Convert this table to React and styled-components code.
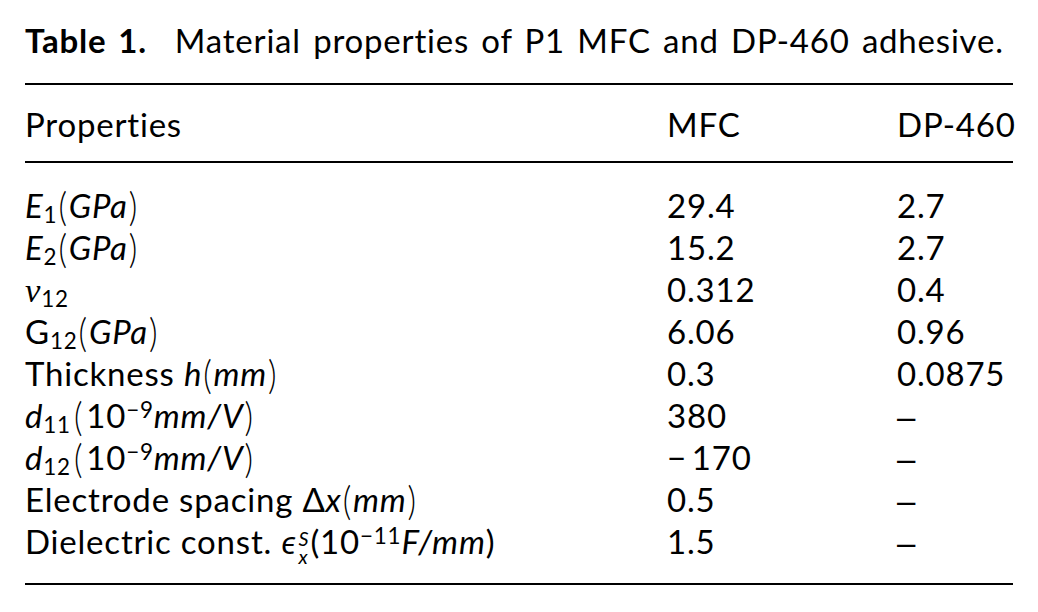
import styled, { createGlobalStyle } from "styled-components";

const GlobalStyle = createGlobalStyle`
  body {
    margin: 0;
    background: #fff;
    color: #000;
    font-family: Lato, "Open Sans", sans-serif;
  }
`;

const Page = styled.div`
  width: 988px;
  padding: 19px 0 0 25px;
`;

const Caption = styled.div`
  font-size: 33px;
  line-height: 42px;
  letter-spacing: 0.8px;
  word-spacing: 3px;
  margin-bottom: 22px;
  white-space: nowrap;
`;

const CaptionLabel = styled.span`
  font-weight: 700;
  margin-right: 28px;
`;

const Rule = styled.div`
  height: 2px;
  background: #000;
`;

const Grid = styled.div`
  display: grid;
  grid-template-columns: 642px 230px 1fr;
  grid-auto-rows: 42px;
  font-size: 33px;
  line-height: 42px;
  letter-spacing: 0.8px;
  padding: ${(p) => p.$pad};
`;

const Cell = styled.div`
  white-space: nowrap;
`;

const Var = styled.i`
  font-style: italic;
`;

const Sub = styled.span`
  font-size: 0.68em;
  vertical-align: -0.22em;
  line-height: 0;
  font-style: normal;
`;

const Sup = styled.span`
  font-size: 0.68em;
  vertical-align: 0.45em;
  line-height: 0;
`;

const Paren = styled.span`
  display: inline-block;
  transform: scaleY(1.22);
  font-weight: 300;
  margin: 0 ${(p) => p.$gap || 1}px;
`;

const Nu = styled.span`
  font-family: "Liberation Serif", serif;
  font-style: italic;
  font-size: 1.05em;
`;

const Scripts = styled.span`
  display: inline-flex;
  flex-direction: column;
  font-size: 0.6em;
  line-height: 0.95;
  vertical-align: 0.42em;
  font-style: italic;
  margin: 0 1px 0 2px;
`;

const Dash = styled.span`
  font-family: "Liberation Sans", sans-serif;
`;

const dash = <Dash>–</Dash>;

const rows = [
  [
    <>
      <Var>E</Var>
      <Sub>1</Sub>
      <Paren>(</Paren>
      <Var>GPa</Var>
      <Paren>)</Paren>
    </>,
    "29.4",
    "2.7",
  ],
  [
    <>
      <Var>E</Var>
      <Sub>2</Sub>
      <Paren>(</Paren>
      <Var>GPa</Var>
      <Paren>)</Paren>
    </>,
    "15.2",
    "2.7",
  ],
  [
    <>
      <Nu>ν</Nu>
      <Sub>12</Sub>
    </>,
    "0.312",
    "0.4",
  ],
  [
    <>
      G<Sub>12</Sub>
      <Paren>(</Paren>
      <Var>GPa</Var>
      <Paren>)</Paren>
    </>,
    "6.06",
    "0.96",
  ],
  [
    <>
      Thickness <Var>h</Var>
      <Paren>(</Paren>
      <Var>mm</Var>
      <Paren>)</Paren>
    </>,
    "0.3",
    "0.0875",
  ],
  [
    <>
      <Var>d</Var>
      <Sub>11</Sub>
      <Paren $gap={3}>(</Paren>10<Sup>−9</Sup>
      <Var>mm/V</Var>
      <Paren>)</Paren>
    </>,
    "380",
    dash,
  ],
  [
    <>
      <Var>d</Var>
      <Sub>12</Sub>
      <Paren $gap={3}>(</Paren>10<Sup>−9</Sup>
      <Var>mm/V</Var>
      <Paren>)</Paren>
    </>,
    "−\u2009170",
    dash,
  ],
  [
    <>
      Electrode spacing Δ<Var>x</Var>
      <Paren>(</Paren>
      <Var>mm</Var>
      <Paren>)</Paren>
    </>,
    "0.5",
    dash,
  ],
  [
    <>
      Dielectric const. <Var>ϵ</Var>
      <Scripts>
        <span>S</span>
        <span>x</span>
      </Scripts>
      (10<Sup>−11</Sup>
      <Var>F/mm</Var>)
    </>,
    "1.5",
    dash,
  ],
];

export default function App() {
  return (
    <Page>
      <GlobalStyle />
      <Caption>
        <CaptionLabel>Table 1.</CaptionLabel>
        Material properties of P1 MFC and DP-460 adhesive.
      </Caption>
      <Rule />
      <Grid $pad="18px 0 16px">
        <Cell>Properties</Cell>
        <Cell>MFC</Cell>
        <Cell>DP-460</Cell>
      </Grid>
      <Rule />
      <Grid $pad="21px 0 21px">
        {rows.map((r, i) =>
          r.map((c, j) => <Cell key={`${i}-${j}`}>{c}</Cell>)
        )}
      </Grid>
      <Rule />
    </Page>
  );
}
